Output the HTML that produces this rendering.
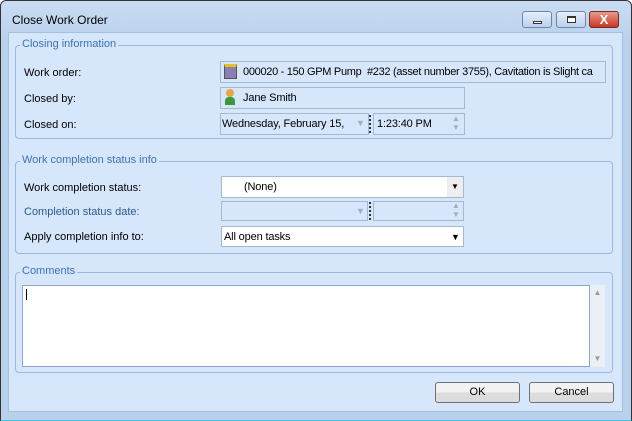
<!DOCTYPE html><html><head><style>
*{box-sizing:border-box}
body{margin:0;width:632px;height:421px;overflow:hidden;font-family:"Liberation Sans",sans-serif;font-size:11px;color:#000;background:#fff}
.a{position:absolute}
#win{left:0;top:0;width:632px;height:421px;border:1px solid #333;border-bottom-color:#3cc8e8;background:linear-gradient(#c9dcf3,#bed4ee 30px,#b9d1ea 40px);border-radius:6px 6px 0 0}
#client{left:8px;top:32px;width:615px;height:380px;background:#d6e6fb;border:1px solid #a6c0df}
.grp{border:1px solid #9db7d9;border-radius:4px}
.leg{background:#d6e6fb;color:#3f72b5;padding:0 2px;font-size:11px}
.box{background:#d6e6fb;border:1px solid #a4b8d2;line-height:20px;padding-left:3px;white-space:nowrap;overflow:hidden;letter-spacing:-0.15px}
.wh{background:#fff}
.btn{border:1px solid #707070;border-radius:3px;background:linear-gradient(#f2f2f2 50%,#dcdcdc 50%);text-align:center;line-height:19px}
.tb{border:1px solid #6d86a8;border-radius:3px;background:linear-gradient(#e4eefb,#bdd0ea);width:30px;height:17px;top:11px}
</style></head><body>
<div id="win" class="a"></div>
<div class="a" style="left:12px;top:13px;font-size:12px">Close Work Order</div>
<div class="a tb" style="left:522px"><div class="a" style="left:10px;top:9px;width:9px;height:3px;border:1px solid #333;background:#fff"></div></div>
<div class="a tb" style="left:556px"><div class="a" style="left:10px;top:4px;width:9px;height:7px;border:1px solid #333;border-top-width:2px;background:#fff"></div></div>
<div class="a tb" style="left:589px;width:30px;background:linear-gradient(#e99a8a,#c53820);border-color:#7a2a20;color:#fff;font-weight:bold;font-size:13px;text-align:center;line-height:15px">X</div>
<div id="client" class="a"></div>

<div class="a grp" style="left:15px;top:45px;width:598px;height:94px"></div>
<div class="a leg" style="left:20px;top:38px">Closing information</div>
<div class="a" style="left:24px;top:67px">Work order:</div>
<div class="a box" style="left:220px;top:61px;width:386px;height:22px;padding-left:22px;letter-spacing:-0.3px">000020 - 150 GPM Pump&nbsp; #232 (asset number 3755), Cavitation is Slight ca</div>
<div class="a" style="left:224px;top:64px;width:13px;height:15px;background:#8a7fb5;border:1px solid #555;border-top:3px solid #e8c020"></div>
<div class="a" style="left:24px;top:93px">Closed by:</div>
<div class="a box" style="left:220px;top:87px;width:245px;height:22px;padding-left:22px">Jane Smith</div>
<div class="a" style="left:226px;top:89px;width:8px;height:8px;border-radius:50%;background:#e9a540"></div>
<div class="a" style="left:225px;top:97px;width:10px;height:8px;border-radius:4px 4px 0 0;background:#3a9a3a"></div>
<div class="a" style="left:24px;top:119px">Closed on:</div>
<div class="a box" style="left:220px;top:113px;width:149px;height:22px;padding-left:1px">Wednesday, February 15,</div>
<div class="a" style="left:356px;top:118px;color:#aab;font-size:9px">▼</div>
<div class="a" style="left:369px;top:115px;width:2px;height:18px;border-left:2px dotted #333"></div>
<div class="a box" style="left:373px;top:113px;width:92px;height:22px">1:23:40 PM</div>
<div class="a" style="left:452px;top:114px;color:#aab;font-size:8px;line-height:9px">▲<br>▼</div>

<div class="a grp" style="left:15px;top:161px;width:598px;height:93px"></div>
<div class="a leg" style="left:20px;top:154px">Work completion status info</div>
<div class="a" style="left:24px;top:182px">Work completion status:</div>
<div class="a box wh" style="left:221px;top:176px;width:243px;height:22px;padding-left:22px">(None)</div>
<div class="a" style="left:447px;top:177px;width:16px;height:20px;background:#eee;text-align:center;line-height:20px;font-size:8px">▼</div>
<div class="a" style="left:24px;top:206px;color:#2e5a90">Completion status date:</div>
<div class="a box" style="left:221px;top:201px;width:147px;height:20px"></div>
<div class="a" style="left:356px;top:206px;color:#aab;font-size:9px">▼</div>
<div class="a" style="left:369px;top:202px;width:2px;height:18px;border-left:2px dotted #333"></div>
<div class="a box" style="left:373px;top:201px;width:91px;height:20px"></div>
<div class="a" style="left:452px;top:201px;color:#aab;font-size:8px;line-height:9px">▲<br>▼</div>
<div class="a" style="left:24px;top:231px">Apply completion info to:</div>
<div class="a box wh" style="left:221px;top:226px;width:243px;height:21px;padding-left:2px">All open tasks</div>
<div class="a" style="left:451px;top:232px;font-size:9px">▼</div>

<div class="a grp" style="left:15px;top:272px;width:598px;height:101px"></div>
<div class="a leg" style="left:20px;top:265px">Comments</div>
<div class="a" style="left:22px;top:285px;width:568px;height:82px;background:#fff;border:1px solid #8aa6cc"></div>
<div class="a" style="left:26px;top:289px;width:1px;height:11px;background:#000"></div>
<div class="a" style="left:590px;top:285px;width:15px;height:82px;background:#eceff3;color:#999;font-size:8px;text-align:center;padding-top:3px">▲<div style="position:absolute;bottom:4px;width:15px">▼</div></div>

<div class="a btn" style="left:435px;top:382px;width:85px;height:21px">OK</div>
<div class="a btn" style="left:529px;top:382px;width:85px;height:21px">Cancel</div>
</body></html>
